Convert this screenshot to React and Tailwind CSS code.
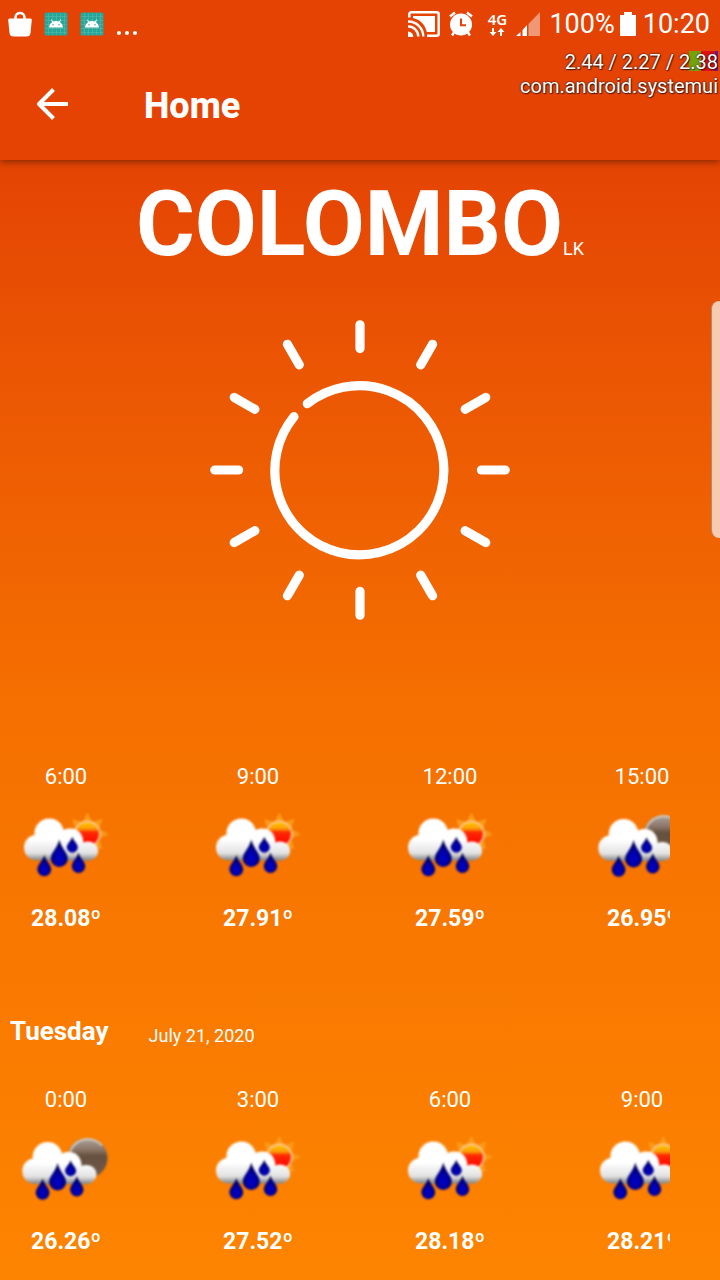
import React from "react";

const today = [
  { time: "6:00", temp: "28.08º" },
  { time: "9:00", temp: "27.91º" },
  { time: "12:00", temp: "27.59º" },
  { time: "15:00", temp: "26.95º", night: true },
];

const tuesday = [
  { time: "0:00", temp: "26.26º", night: true },
  { time: "3:00", temp: "27.52º" },
  { time: "6:00", temp: "28.18º" },
  { time: "9:00", temp: "28.21º" },
];

const angles = [0, 30, 60, 90, 120, 150, 180, 210, 240, 270, 300, 330];

function SunIcon() {
  return (
    <svg viewBox="0 0 300 300" className="size-[300px]" fill="none" stroke="white" strokeWidth="9.2" strokeLinecap="round" role="img" aria-label="Clear sky">
      <path d="M97.300 83.700A84.500 84.500 0 1 1 84 96.700" />
      {angles.map((a) => (
        <path key={a} d="M150 4.8V28.6" transform={`rotate(${a} 150 150)`} />
      ))}
    </svg>
  );
}

function Gradients() {
  return (
    <svg className="absolute size-0" aria-hidden="true">
      <defs>
        <linearGradient id="cloud" gradientUnits="userSpaceOnUse" x1="0" y1="23" x2="0" y2="66">
          <stop offset="0.5" stopColor="#ffffff" />
          <stop offset="0.82" stopColor="#e2e2e2" />
          <stop offset="1" stopColor="#7c7c7c" />
        </linearGradient>
        <linearGradient id="sun" x1="0" y1="0" x2="0" y2="1">
          <stop offset="0" stopColor="#ffc400" />
          <stop offset="0.28" stopColor="#fb9a08" />
          <stop offset="0.42" stopColor="#ff2a00" />
          <stop offset="1" stopColor="#ff0000" />
        </linearGradient>
        <linearGradient id="moon" x1="0" y1="0" x2="0" y2="1">
          <stop offset="0" stopColor="#ada49c" />
          <stop offset="0.3" stopColor="#8a7465" />
          <stop offset="0.45" stopColor="#65503f" />
          <stop offset="1" stopColor="#735a49" />
        </linearGradient>
        <radialGradient id="drop" cx="0.5" cy="0.68" r="0.5">
          <stop offset="0" stopColor="#0000d0" />
          <stop offset="0.6" stopColor="#0000a0" />
          <stop offset="1" stopColor="#000060" />
        </radialGradient>
        <filter id="soft" x="-10%" y="-10%" width="120%" height="120%" colorInterpolationFilters="sRGB">
          <feGaussianBlur stdDeviation="0.9" />
        </filter>
      </defs>
    </svg>
  );
}

function RainIcon({ night }) {
  return (
    <svg viewBox="0 0 100 100" className="size-[100px] shrink-0" role="img" aria-label={night ? "Night rain" : "Rain with sun"}>
      <g filter="url(#soft)">
        {night ? (
          <g>
            <circle cx="71.5" cy="40" r="20" fill="url(#moon)" />
            <path d="M53 38A19 19 0 0 1 86 27.500" fill="none" stroke="#dcd5cf" strokeWidth="2" opacity="0.85" />
          </g>
        ) : (
          <g>
            {[0, 45, 90, 135, 180, 225, 270, 315].map((a) => (
              <path key={a} d="M66.500 27L71.300 17.500L76.100 27Z" fill="#fa9a18" transform={`rotate(${a} 71.3 39)`} />
            ))}
            <circle cx="71.300" cy="39" r="13.400" fill="#ffc591" />
            <circle cx="71.300" cy="39" r="11.600" fill="url(#sun)" />
          </g>
        )}
        <g transform={night ? "translate(-1.7 0.5)" : undefined}>
          <path
            d="M20 65.500C13 65 8 59.500 8 52.500C8 46 12.500 41 18.500 40C17.500 31 24.500 23.500 33.500 23.500C40.500 23.500 46 28 47.700 35C50 33.800 52.500 33.500 55 33.500C62 33.500 67.500 39.500 67.300 47.500C75 44.500 82.500 49.500 82.200 56C82 61.500 77.500 65.500 72 65.700Z"
            fill="url(#cloud)"
          />
          <path d="M28.300 60C30 66 35.200 69.500 35.200 74.300A6.900 6.900 0 0 1 21.400 74.300C21.400 69.500 26.600 66 28.300 60Z" fill="url(#drop)" />
          <path d="M43.300 44.500C45.500 53.500 51.800 57.500 51.800 63.500A8.500 8.500 0 0 1 34.800 63.500C34.800 57.500 41.100 53.500 43.300 44.500Z" fill="url(#drop)" />
          <path d="M56.300 41.500C57.500 46.500 61.800 48.500 61.800 52.200A5.500 5.500 0 0 1 50.800 52.200C50.800 48.500 55.100 46.500 56.300 41.500Z" fill="url(#drop)" />
          <path d="M62.500 57.500C64 63.200 69.200 66.500 69.200 71.200A6.700 6.700 0 0 1 55.800 71.200C55.800 66.500 61 63.200 62.500 57.500Z" fill="url(#drop)" />
        </g>
      </g>
    </svg>
  );
}

function HourRow({ hours }) {
  return (
    <ul className="mr-[50px] flex gap-[60px] overflow-hidden">
      {hours.map((h) => (
        <li key={h.time} className="flex w-[132px] shrink-0 flex-col items-center">
          <span className="mb-1 text-[22px] leading-7">{h.time}</span>
          <RainIcon night={h.night} />
          <span className="mt-[10px] text-[23px] leading-7 font-bold">{h.temp}</span>
        </li>
      ))}
    </ul>
  );
}

function AndroidTile() {
  return (
    <svg viewBox="0 0 24 24" className="size-6" aria-hidden="true">
      <rect x="0.500" y="0.500" width="23" height="23" rx="1.500" fill="#26a69a" />
      <path d="M4.500 1V23M8.500 1V23M12.500 1V23M16.500 1V23M20.500 1V23M1 4.500H23M1 8.500H23M1 12.500H23M1 16.500H23M1 20.500H23" stroke="#57b9a8" strokeWidth="0.600" />
      <path d="M5 15.500C5.200 12.700 6.400 11 8.200 9.900L6.900 7.800L7.600 7.400L9 9.500C11 8.800 13 8.800 15 9.500L16.400 7.400L17.100 7.800L15.800 9.900C17.600 11 18.800 12.700 19 15.500Z" fill="white" />
      <circle cx="9" cy="12.800" r="0.700" fill="#26a69a" />
      <circle cx="15" cy="12.800" r="0.700" fill="#26a69a" />
    </svg>
  );
}

function StatusBar() {
  return (
    <div className="flex h-12 items-center justify-between pr-[10px] pl-2">
      <div className="flex items-center gap-3">
        <svg viewBox="0 0 24 26" className="h-[26px] w-6" aria-hidden="true">
          <path d="M7.500 9V6.500C7.500 0.500 16.500 0.500 16.500 6.500V9" fill="none" stroke="white" strokeWidth="2.600" />
          <path d="M1.500 7.500H22.500Q24 7.500 23.800 9L22.500 22Q22 25.500 18.500 25.500H5.500Q2 25.500 1.500 22L0.200 9Q0 7.500 1.500 7.500Z" fill="white" />
        </svg>
        <AndroidTile />
        <AndroidTile />
        <svg viewBox="0 0 22 24" className="h-6 w-[22px]" fill="white" aria-hidden="true">
          <circle cx="3" cy="21" r="2" />
          <circle cx="11" cy="21" r="2" />
          <circle cx="19" cy="21" r="2" />
        </svg>
      </div>
      <div className="flex items-center">
        <svg viewBox="0 0 32 26" className="mr-[9px] h-[26px] w-8" fill="none" stroke="white" strokeWidth="2.400" aria-hidden="true">
          <path d="M1.300 6.500V3.300Q1.300 1.300 3.300 1.300H28.700Q30.700 1.300 30.700 3.300V22.700Q30.700 24.700 28.700 24.700H19" />
          <path d="M5 5H27V21H18.800C17 13.500 12 8.300 5 7Z" fill="white" stroke="none" />
          <path d="M0 10.500A15 15 0 0 1 15.300 25.500M0 15.500A10 10 0 0 1 10.300 25.500" />
          <path d="M0 20.500A5.300 5.300 0 0 1 5.300 26H0Z" fill="white" stroke="none" />
        </svg>
        <svg viewBox="0 0 24 26" className="mr-[14px] h-[26px] w-6" aria-hidden="true">
          <circle cx="12" cy="13.500" r="11" fill="white" />
          <path d="M1 5.500L6 1.500M18 1.500L23 5.500M5 21.500L3 24.500M19 21.500L21 24.500" stroke="white" strokeWidth="2.400" />
          <path d="M12 7.500V14.300H17" fill="none" stroke="#e44304" strokeWidth="2" />
        </svg>
        <div className="mr-[9px] flex w-5 flex-col items-center">
          <span className="font-['Noto_Sans',sans-serif] text-[15px] leading-[15px] font-semibold">4G</span>
          <svg viewBox="0 0 16 10" className="h-[10px] w-4" fill="white" aria-hidden="true">
            <path d="M3 1H5V5H7.500L4 9L0.500 5H3ZM11 9H13V5H15.500L12 1L8.500 5H11Z" />
          </svg>
        </div>
        <svg viewBox="0 0 24 24" className="mr-[9px] size-6" fill="white" aria-hidden="true">
          <path d="M12.500 12L24 0V24H12.500Z" opacity="0.450" />
          <path d="M6.500 18L11 13V24H6.500Z" />
          <path d="M0 24L4.500 20V24Z" />
        </svg>
        <span className="mr-[5px] text-[27px] leading-8">100%</span>
        <svg viewBox="0 0 16 24" className="mr-[7px] h-6 w-4" fill="white" aria-hidden="true">
          <path d="M4 0H12V3H16V24H0V3H4Z" />
        </svg>
        <span className="text-[27px] leading-8">10:20</span>
      </div>
    </div>
  );
}

export default function App() {
  return (
    <div className="relative min-h-screen overflow-hidden bg-linear-to-b from-[#e44304] from-12% via-[#f57000] via-56% to-[#fd8400] font-[Roboto,sans-serif] text-white">
      <Gradients />
      <header className="bg-[#e44304] shadow-[0_2px_7px_rgba(0,0,0,0.4)]">
        <StatusBar />
        <div className="flex h-28 items-center pl-9">
          <button type="button" aria-label="Back" className="mr-[76px]">
            <svg viewBox="0 0 32 32" className="size-8" fill="none" stroke="white" strokeWidth="4" aria-hidden="true">
              <path d="M32 16H3M17.500 1.500L3 16L17.500 30.500" strokeLinejoin="round" />
            </svg>
          </button>
          <h1 className="mt-1 text-[36px] leading-10 font-extrabold">Home</h1>
        </div>
      </header>

      <aside className="absolute top-[50px] right-[2px] text-right text-[20px] leading-6 [text-shadow:0_0_2px_#000,1px_1px_1px_#0008]">
        <div className="absolute top-[1px] right-0 flex h-5">
          <span className="w-3 bg-[#76a00c]" />
          <span className="w-[14px] bg-[#e01010]" />
          <span className="w-[3px] bg-[#6a1a90]" />
        </div>
        <p className="relative">2.44 / 2.27 / 2.38</p>
        <p>com.android.systemui</p>
      </aside>

      <main>
        <div className="flex items-baseline justify-center pt-[17px]">
          <h2 className="text-[90px] leading-[96px] font-bold">COLOMBO</h2>
          <span className="text-[18px]">LK</span>
        </div>
        <div className="flex justify-center pt-[47px] pb-[143px]">
          <SunIcon />
        </div>
        <HourRow hours={today} />
        <div className="mt-[82px] mb-[39px] flex items-end gap-10 pl-[10px]">
          <h3 className="text-[26px] leading-8 font-bold">Tuesday</h3>
          <p className="text-[18px] leading-[22px]">July 21, 2020</p>
        </div>
        <HourRow hours={tuesday} />
      </main>

      <div className="absolute top-[301px] right-0 h-[237px] w-[9px] rounded-l-lg border-l border-[#b8866a] bg-[#f6cbb2]" />
    </div>
  );
}
